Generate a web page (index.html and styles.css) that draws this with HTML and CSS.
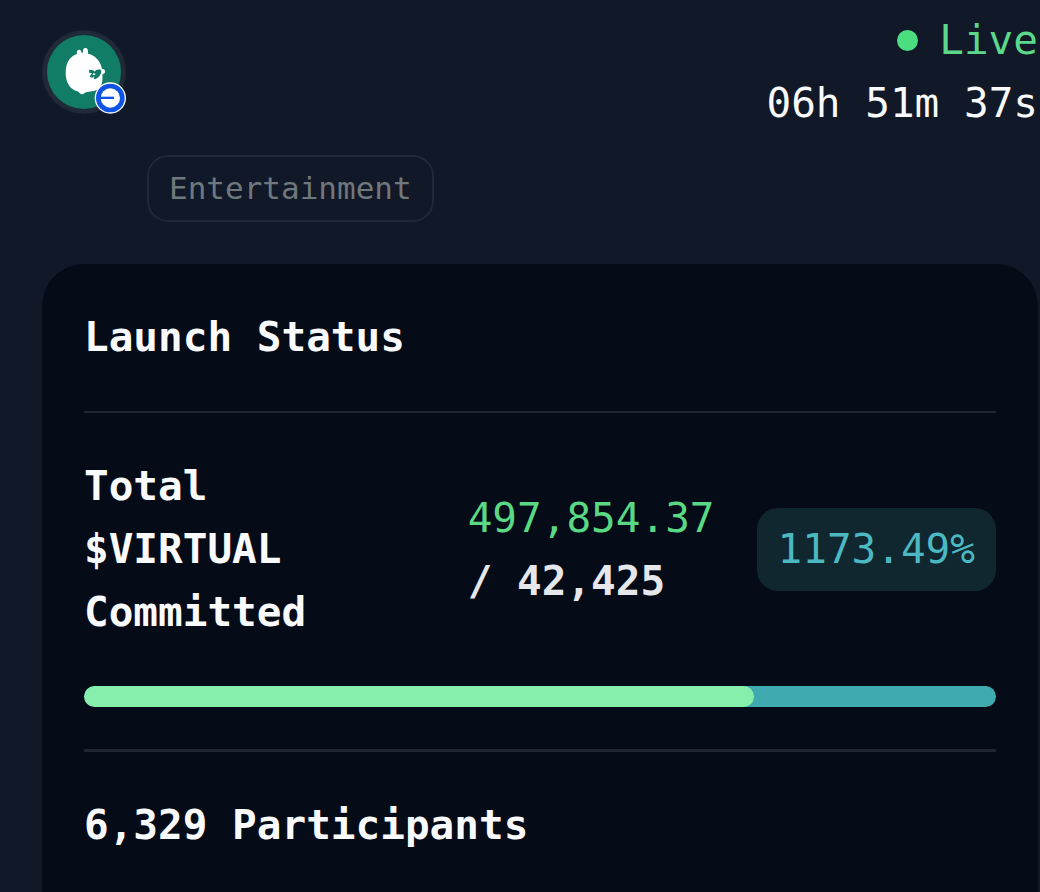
FILE: index.html
```html
<!DOCTYPE html>
<html lang="en">
<head>
  <meta charset="UTF-8">
  <meta name="viewport" content="width=device-width, initial-scale=1.0">
  <title>Launch Status</title>
  <link rel="stylesheet" href="styles.css">
</head>
<body>
  <header class="project-header">
    <svg class="avatar" viewBox="36 33 252 252" aria-hidden="true">
      <circle cx="162" cy="159" r="126" fill="#1f2937"/>
      <circle cx="162" cy="159" r="111" fill="#117d66"/>
      <path fill="#fff" d="M141 105 C138 95 146 90 152 94 L155 101 L159 101 C157 90 163 86 169 87 C175 90 174 97 174 104 C192 108 205 120 211 134 C214 141 215 146 216 150 C223 149 227 155 225 160 C223 165 219 165 217 167 C219 188 215 204 200 213 C188 219 174 217 164 221 C160 227 154 228 149 222 C145 216 136 217 129 211 C113 201 107 181 107 162 C107 132 120 111 141 105 Z"/>
      <path fill="#117d66" d="M177 153 C183 151 190 153 194 158 C197 152 206 150 213 153 C215 158 213 164 210 169 C206 175 201 179 194 181 C190 178 191 175 193 171 L187 176 C179 176 178 171 184 166 C189 163 183 161 178 162 Z"/>
      <path fill="#fff" d="M190 162 L197 165 L193 169 L188 168 Z"/>
      <circle cx="241" cy="237" r="47" fill="#fff"/>
      <circle cx="241" cy="237" r="43" fill="#0f53e5"/>
      <circle cx="241" cy="237" r="29" fill="#fff"/>
      <path fill="#0f53e5" d="M210 233 H252 V240 H210 Z"/>
    </svg>
    <div class="launch-timer">
      <div class="live"><span class="live-dot"></span>Live</div>
      <div>06h 51m 37s</div>
    </div>
  </header>

  <div class="tags">
    <span class="tag">Entertainment</span>
  </div>

  <main class="status-card">
    <h2 class="card-title">Launch Status</h2>
    <section class="committed">
      <div class="committed-row">
        <h3 class="committed-label">Total $VIRTUAL Committed</h3>
        <div class="committed-value">
          <div class="raised">497,854.37</div>
          <div class="goal">/ 42,425</div>
        </div>
        <span class="percent">1173.49%</span>
      </div>
      <div class="progress">
        <div class="progress-fill" style="width: 73.5%"></div>
      </div>
    </section>
    <h3 class="participants">6,329 Participants</h3>
  </main>
</body>
</html>
```

FILE: styles.css
```css
* {
  box-sizing: border-box;
}
body {
  margin: 0;
  padding: 9px 2px 0 42px;
  min-height: 100vh;
  display: flex;
  flex-direction: column;
  background-color: #111827;
  color: #f9fafb;
  font-family: "DejaVu Sans Mono", "Liberation Mono", monospace;
  font-size: 41px;
  line-height: 63px;
}
h2, h3 {
  margin: 0;
  font-size: 41px;
  font-weight: bold;
}
.project-header {
  display: flex;
  justify-content: space-between;
  align-items: center;
}
.avatar {
  width: 84px;
  height: 84px;
}
.launch-timer {
  text-align: right;
}
.live {
  display: flex;
  justify-content: flex-end;
  align-items: center;
  gap: 21px;
  color: #5bd88c;
}
.live-dot {
  width: 21px;
  height: 21px;
  border-radius: 50%;
  background-color: #4ade80;
}
.tags {
  display: flex;
  padding: 20px 0 42px 105px;
}
.tag {
  padding: 0 20px;
  border: 2px solid #1f2937;
  border-radius: 21px;
  color: #6f787d;
  font-size: 31px;
}
.status-card {
  flex: 1;
  padding: 42px;
  border-radius: 42px 42px 0 0;
  background-color: #050b17;
}
.card-title {
  padding-bottom: 42px;
  border-bottom: 2px solid #1f2532;
}
.committed {
  padding: 42px 0;
  border-bottom: 3px solid #1f2532;
}
.committed-row {
  display: flex;
  align-items: center;
  gap: 42px;
  margin-bottom: 42px;
}
.committed-label {
  max-width: 300px;
}
.committed-value {
  margin-left: auto;
}
.raised {
  color: #5bd884;
}
.goal {
  color: #e5e7eb;
  font-weight: bold;
}
.percent {
  padding: 10px 21px;
  border-radius: 21px;
  background-color: #11272f;
  color: #4cb8c2;
}
.progress {
  height: 21px;
  border-radius: 11px;
  background-color: #3faab0;
  overflow: hidden;
}
.progress-fill {
  height: 100%;
  border-radius: 11px;
  background-color: #86efac;
}
.participants {
  padding-top: 42px;
}
```
